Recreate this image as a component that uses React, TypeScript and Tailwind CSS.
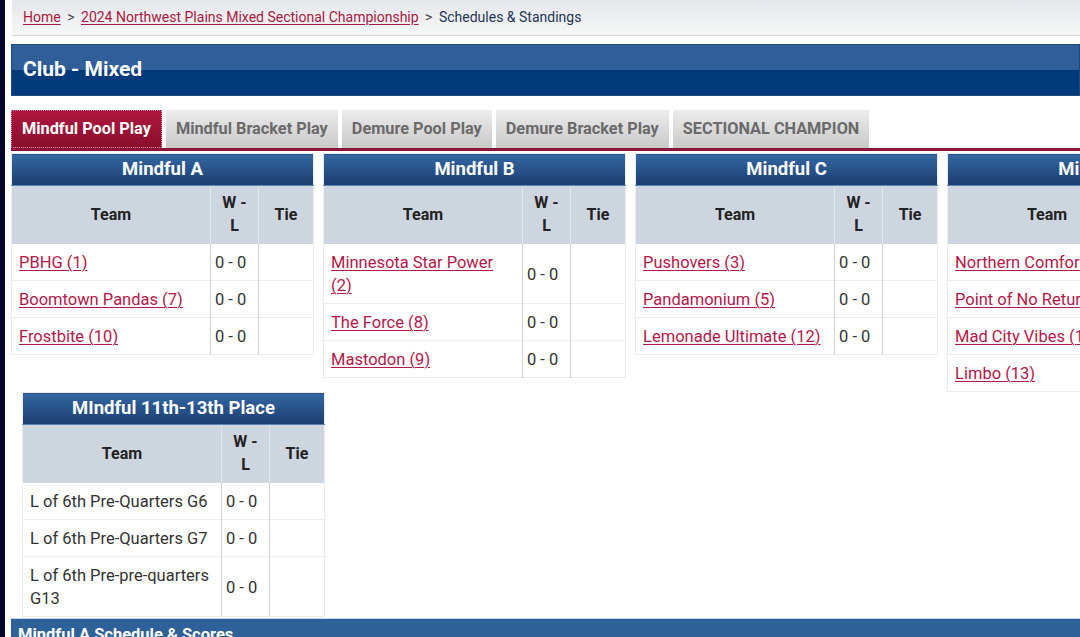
import React from 'react';

type Row = { team: string; wl: string; link?: boolean };
type Pool = { title: string; rows: Row[] };

const pools: Pool[] = [
  {
    title: 'Mindful A',
    rows: [
      { team: 'PBHG (1)', wl: '0 - 0', link: true },
      { team: 'Boomtown Pandas (7)', wl: '0 - 0', link: true },
      { team: 'Frostbite (10)', wl: '0 - 0', link: true },
    ],
  },
  {
    title: 'Mindful B',
    rows: [
      { team: 'Minnesota Star Power (2)', wl: '0 - 0', link: true },
      { team: 'The Force (8)', wl: '0 - 0', link: true },
      { team: 'Mastodon (9)', wl: '0 - 0', link: true },
    ],
  },
  {
    title: 'Mindful C',
    rows: [
      { team: 'Pushovers (3)', wl: '0 - 0', link: true },
      { team: 'Pandamonium (5)', wl: '0 - 0', link: true },
      { team: 'Lemonade Ultimate (12)', wl: '0 - 0', link: true },
    ],
  },
  {
    title: 'Mindful D',
    rows: [
      { team: 'Northern Comfort (4)', wl: '0 - 0', link: true },
      { team: 'Point of No Return (6)', wl: '0 - 0', link: true },
      { team: 'Mad City Vibes (11)', wl: '0 - 0', link: true },
      { team: 'Limbo (13)', wl: '0 - 0', link: true },
    ],
  },
];

const placement: Pool = {
  title: 'MIndful 11th-13th Place',
  rows: [
    { team: 'L of 6th Pre-Quarters G6', wl: '0 - 0' },
    { team: 'L of 6th Pre-Quarters G7', wl: '0 - 0' },
    { team: 'L of 6th Pre-pre-quarters G13', wl: '0 - 0' },
  ],
};

const tabs = ['Mindful Pool Play', 'Mindful Bracket Play', 'Demure Pool Play', 'Demure Bracket Play', 'SECTIONAL CHAMPION'];

function PoolTable({ pool }: { pool: Pool }) {
  return (
    <table className="w-[302px] shrink-0 table-fixed border-collapse border border-[#ececec] text-[16.5px] leading-[23px]">
      <colgroup>
        <col className="w-[199px]" />
        <col className="w-[48px]" />
        <col className="w-[55px]" />
      </colgroup>
      <thead>
        <tr>
          <th
            colSpan={3}
            className="h-[32px] border-b border-[#5b82b3] bg-linear-to-b from-[#3467a3] to-[#1b3e71] text-center text-[18.5px] font-bold text-white"
          >
            {pool.title}
          </th>
        </tr>
        <tr className="bg-[#cdd5df] text-[16px] text-[#222]">
          <th className="border-r border-[#e2e7ec] px-[6px] pb-[7px] pt-[5px] font-bold">Team</th>
          <th className="border-r border-[#e2e7ec] px-[4px] pb-[7px] pt-[5px] font-bold">
            W -<br />L
          </th>
          <th className="px-[4px] pb-[7px] pt-[5px] font-bold">Tie</th>
        </tr>
      </thead>
      <tbody>
        {pool.rows.map((r) => (
          <tr key={r.team} className="border-b border-[#ececec]">
            <td className="border-r border-[#d2d2d2] pb-[6px] pl-[7px] pr-[9px] pt-[7px] text-[#333]">
              {r.link ? (
                <a href="#" className="text-[#b5174a] underline decoration-1 underline-offset-2">
                  {r.team}
                </a>
              ) : (
                r.team
              )}
            </td>
            <td className="whitespace-nowrap border-r border-[#d2d2d2] pb-[6px] pl-[4px] pt-[7px] text-[#333]">{r.wl}</td>
            <td className="pb-[6px] pt-[7px]"></td>
          </tr>
        ))}
      </tbody>
    </table>
  );
}

export default function App() {
  return (
    <div
      className="flex h-[637px] w-full overflow-hidden bg-white"
      style={{ fontFamily: 'Roboto, "Liberation Sans", sans-serif' }}
    >
      <div className="w-[5px] shrink-0 bg-[#07072e]" />
      <div className="flex min-w-0 flex-1 flex-col pl-[6px]">
        {/* Breadcrumb */}
        <div className="ml-[1px] flex h-[36px] shrink-0 items-center border-b border-[#cfd3d8] bg-linear-to-b from-[#e4e7eb] to-[#f7f7f7] pl-[11px] text-[14px] text-[#444]">
          <a href="#" className="text-[#a8193f] underline underline-offset-2">Home</a>
          <span className="mx-[6.5px]">&gt;</span>
          <a href="#" className="text-[#a8193f] underline underline-offset-2">2024 Northwest Plains Mixed Sectional Championship</a>
          <span className="mx-[6.5px]">&gt;</span>
          <span className="text-[#1f3557]">Schedules &amp; Standings</span>
        </div>

        {/* Division header */}
        <div className="mt-[8px] flex h-[52px] shrink-0 items-center border border-[#1f4a80] bg-linear-to-b from-[#2f5e98] from-50% to-[#033a7b] to-50% pl-[11px]">
          <h1 className="text-[21px] font-bold text-white">Club - Mixed</h1>
        </div>

        {/* Tabs */}
        <div className="mt-[14px] flex shrink-0 gap-[4px]">
          {tabs.map((t, i) =>
            i === 0 ? (
              <div
                key={t}
                className="flex h-[38px] items-center border border-dotted border-[#d98ba0] bg-linear-to-b from-[#b0163f] to-[#890f2f] px-[10px] text-[16.3px] font-bold text-white"
              >
                {t}
              </div>
            ) : (
              <div
                key={t}
                className="flex h-[38px] items-center bg-linear-to-b from-[#ececec] to-[#c9c9c9] px-[10px] text-[16.3px] font-bold text-[#6a6a6a]"
              >
                {t}
              </div>
            )
          )}
        </div>
        <div className="h-[3px] shrink-0 bg-[#8b1537]" />

        {/* Pools */}
        <div className="mt-[2px] flex shrink-0 items-start gap-[9px]">
          {pools.map((p) => (
            <PoolTable key={p.title} pool={p} />
          ))}
        </div>

        <div className="ml-[11px] shrink-0">
          <PoolTable pool={placement} />
        </div>

        {/* Schedule bar */}
        <div className="mt-[1px] h-[40px] shrink-0 border-t border-[#bcd6ea] bg-[#2f6199] pl-[7px] pt-[6px] text-[16.5px] font-bold leading-[20px] text-white">
          Mindful A Schedule &amp; Scores
        </div>
      </div>
    </div>
  );
}
